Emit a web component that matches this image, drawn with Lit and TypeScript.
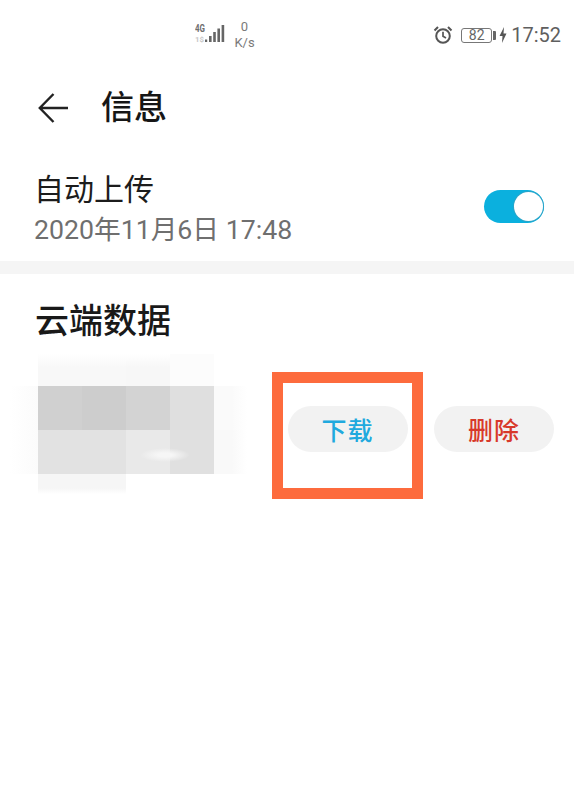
import { LitElement, html, css } from "lit";
import { customElement } from "lit/decorators.js";

const W = "#ffffff";
const fadeTop = (c: string) => `linear-gradient(to bottom, ${W} 0, ${c} 40%)`;
const fadeRight = (c: string) => `linear-gradient(to right, ${c} 0, ${c} 40%, ${W} 75%)`;
const fadeLeft = (c: string) => `linear-gradient(to right, ${W} 0, ${c} 100%)`;
const fadeBottom = (c: string) => `linear-gradient(to bottom, ${c} 70%, ${W} 100%)`;

const mosaic = [
  [W, fadeTop("#f8f8f8"), fadeTop("#f8f8f8"), fadeTop("#f7f7f7"), "#fcfcfc", W],
  [fadeLeft("#fbfbfb"), "#d0d0d0", "#cdcdcd", "#d3d3d3", "#dfdfdf", fadeRight("#fafafa")],
  [fadeLeft("#fbfbfb"), "#e2e2e2", "#e2e2e2", "#e9e9e9", "#e0e0e0", fadeRight("#f9f9f9")],
  [W, fadeBottom("#f6f6f6"), fadeBottom("#f6f6f6"), W, W, W],
];

@customElement("app-root")
export class AppRoot extends LitElement {
  static styles = css`
    :host {
      display: block;
      width: 574px;
      height: 793px;
      background: #fff;
      overflow: hidden;
      font-family: "Roboto", "Noto Sans CJK SC", sans-serif;
      color: #1a1a1a;
    }
    .status {
      height: 68px;
      display: flex;
      align-items: flex-start;
      padding: 19px 13px 0 195px;
      box-sizing: border-box;
      color: #6e6e6e;
    }
    .signal { width: 31px; height: 22px; margin-top: 4px; }
    .speed {
      margin-left: 7px;
      width: 23px;
      text-align: center;
      font-size: 13px;
      line-height: 16px;
      color: #7a7a7a;
    }
    .status-right {
      margin-left: auto;
      display: flex;
      align-items: center;
      height: 32px;
    }
    .alarm { width: 20px; height: 20px; margin-right: 8px; }
    .battery {
      width: 31px;
      height: 15px;
      box-sizing: border-box;
      border: 1px solid #777;
      border-radius: 3px;
      font-size: 14px;
      line-height: 13px;
      text-align: center;
      color: #666;
    }
    .nub { width: 3px; height: 9px; background: #666; margin-left: 1px; border-radius: 0 1px 1px 0; }
    .bolt { width: 8px; height: 16px; margin-left: 3px; }
    .time { margin-left: 4px; font-size: 20px; color: #5f5f5f; letter-spacing: 0; }

    .title-bar {
      height: 80px;
      display: flex;
      align-items: center;
      padding-left: 38px;
    }
    .back { width: 31px; height: 32px; }
    .title-bar h1 {
      margin: 0 0 0 32px;
      font-size: 33px;
      line-height: 44px;
      font-weight: 500;
      color: #161616;
    }
    .auto {
      height: 113px;
      box-sizing: border-box;
      display: flex;
      align-items: flex-start;
      justify-content: space-between;
      padding: 21px 30px 0 34px;
    }
    .auto-title { font-size: 30px; line-height: 42px; color: #1c1c1c; }
    .auto-date { font-size: 26.7px; line-height: 39px; color: #6f6f6f; white-space: nowrap; }
    .toggle {
      width: 60px;
      height: 33px;
      margin-top: 21px;
      box-sizing: border-box;
      border-radius: 17px;
      background: #0bb0de;
      display: flex;
      justify-content: flex-end;
      padding: 2px 1px;
    }
    .knob {
      width: 29px;
      height: 29px;
      border-radius: 50%;
      background: #fff;
      box-shadow: 0 0 0 1px #2ba4c8;
    }
    .divider { height: 13px; background: #f5f5f5; }
    .section {
      margin: 0;
      padding: 24px 0 0 35px;
      font-size: 34px;
      line-height: 46px;
      font-weight: 500;
      color: #191919;
    }
    .row { display: flex; align-items: flex-start; margin-top: 10px; }
    .mosaic {
      position: relative;
      margin-left: 10px;
      width: 248px;
      display: grid;
      grid-template-columns: 28px repeat(5, 44px);
      grid-template-rows: 32px 44px 44px 20px;
      flex: none;
    }
    .smudge {
      position: absolute;
      left: 130px;
      top: 94px;
      width: 50px;
      height: 14px;
      border-radius: 50%;
      background: radial-gradient(ellipse, #f6f6f6 20%, rgba(246, 246, 246, 0) 70%);
    }
    .highlight {
      margin: 18px 0 0 14px;
      width: 151px;
      height: 127px;
      box-sizing: border-box;
      border: 11px solid #fd6b3d;
      display: flex;
      align-items: center;
      justify-content: center;
      padding-bottom: 13px;
      flex: none;
    }
    .btn {
      width: 120px;
      height: 46px;
      border-radius: 23px;
      background: #f2f2f2;
      display: flex;
      align-items: center;
      justify-content: center;
      font-size: 25px;
      font-weight: 500;
      letter-spacing: 1px;
      flex: none;
    }
    .dl { color: #20a9de; }
    .del { color: #d8392b; margin: 52px 0 0 11px; }
  `;

  render() {
    return html`
      <div class="status">
        <svg class="signal" viewBox="0 0 31 22">
          <text x="0" y="9" font-size="10.5" font-weight="700" fill="#6e6e6e" font-family="Roboto, sans-serif" textLength="10" lengthAdjust="spacingAndGlyphs">4G</text>
          <text x="0" y="18.5" font-size="8" font-weight="700" fill="#c8c8c8" font-family="Roboto, sans-serif" textLength="9" lengthAdjust="spacingAndGlyphs">1$</text>
          <rect x="10" y="16.5" width="2.2" height="2.5" fill="#666" />
          <rect x="14" y="13" width="2.6" height="6" fill="#666" />
          <rect x="18.2" y="9" width="2.6" height="10" fill="#666" />
          <rect x="22.4" y="5.5" width="2.6" height="13.5" fill="#666" />
          <rect x="26.6" y="2" width="2.6" height="17" fill="#666" />
        </svg>
        <div class="speed">0<br />K/s</div>
        <div class="status-right">
          <svg class="alarm" viewBox="0 0 20 20" fill="none" stroke="#555" stroke-width="2">
            <circle cx="10" cy="11" r="6.8" />
            <path d="M10 6.8V11.2L13 13" stroke-width="1.7" />
            <path d="M1.5 5.5 5 2M18.5 5.5 15 2" />
          </svg>
          <div class="battery">82</div>
          <div class="nub"></div>
          <svg class="bolt" viewBox="0 0 8 16"><path d="M5 0 0.5 9H3.5L3 16 7.5 6.5H4.5Z" fill="#555" /></svg>
          <div class="time">17:52</div>
        </div>
      </div>

      <div class="title-bar">
        <svg class="back" viewBox="0 0 31 32" fill="none" stroke="#222" stroke-width="2.4">
          <path d="M15.5 2 1.8 16 15.5 30M2 16H30" />
        </svg>
        <h1>信息</h1>
      </div>

      <div class="auto">
        <div>
          <div class="auto-title">自动上传</div>
          <div class="auto-date">2020年11月6日 17:48</div>
        </div>
        <div class="toggle"><div class="knob"></div></div>
      </div>

      <div class="divider"></div>

      <h2 class="section">云端数据</h2>

      <div class="row">
        <div class="mosaic">
          ${mosaic.flat().map((c) => html`<div style="background:${c}"></div>`)}
          <div class="smudge"></div>
        </div>
        <div class="highlight"><div class="btn dl">下载</div></div>
        <div class="btn del">删除</div>
      </div>
    `;
  }
}
